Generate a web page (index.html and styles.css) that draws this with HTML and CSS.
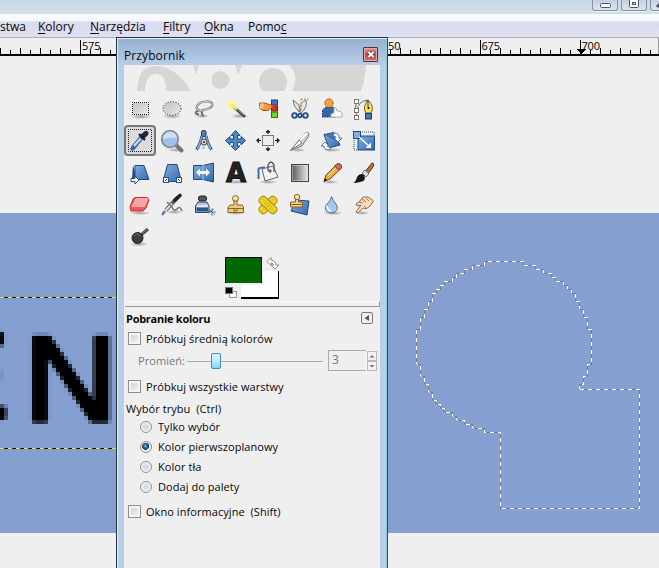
FILE: index.html
```html
<!DOCTYPE html>
<html lang="pl">
<head>
<meta charset="utf-8">
<title>Przybornik</title>
<link rel="stylesheet" href="styles.css">
</head>
<body>
<div class="app">
  <header class="titlebar">
    <span class="winbtn"><svg width="26" height="11"><rect x="8.500" y="3.500" width="10" height="4" rx="1" fill="#fff" stroke="#4e5663"/></svg></span>
    <span class="winbtn"><svg width="26" height="11"><rect x="8.500" y="-3" width="9" height="10.500" rx="1" fill="#fff" stroke="#4e5663"/><rect x="11.500" y="2.500" width="3" height="2" fill="#cdd9e6" stroke="#4e5663"/></svg></span>
    <span class="winbtn"><svg width="26" height="11"><path d="M7 7 13 1" stroke="#4e5663" stroke-width="3"/></svg></span>
  </header>
  <nav class="menubar">
    <span class="m-cut">stwa</span><span class="m-kol"><u>K</u>olory</span><span class="m-nar"><u>N</u>arzędzia</span><span class="m-fil"><u>F</u>iltry</span><span class="m-okn"><u>O</u>kna</span><span class="m-pom">Pomo<u>c</u></span>
  </nav>
  <svg class="ruler" width="659" height="18" shape-rendering="crispEdges">
    <defs><pattern id="ticks" width="20" height="18" patternUnits="userSpaceOnUse"><path d="M0 10h1v6H0zM10 12h1v4h-1z"/></pattern></defs>
    <rect width="658" height="16" fill="url(#ticks)"/>
    <path d="M80 2h1v14h-1zM380 2h1v14h-1zM480 2h1v14h-1zM580 2h1v14h-1zM0 16h659v2H0z"/>
    <path d="M577 11h9l-4.500 5z"/>
    <path d="M658 0h1v16h-1z" fill="#999"/>
    <g class="ruler-text"><text x="82" y="12">575</text><text x="382" y="12">650</text><text x="481.500" y="12">675</text><text x="581.500" y="12">700</text></g>
  </svg>
  <main class="stage">
    <svg class="canvas" width="659" height="320" viewBox="0 213 659 320">
      <defs>
        <filter id="mosaic" filterUnits="userSpaceOnUse" x="-40" y="320" width="160" height="112" color-interpolation-filters="sRGB">
          <feGaussianBlur in="SourceGraphic" stdDeviation="1.300" result="soft"/>
          <feFlood x="-38" y="322" width="1" height="1" flood-color="#000" result="dot"/>
          <feOffset in="dot" x="-40" y="320" width="4" height="4" result="cell"/>
          <feTile in="cell" result="grid"/>
          <feComposite in="soft" in2="grid" operator="in" result="p"/>
          <feOffset in="p" dx="1" result="p1"/><feMerge result="w2"><feMergeNode in="p"/><feMergeNode in="p1"/></feMerge>
          <feOffset in="w2" dx="-2" result="p2"/><feMerge result="w4"><feMergeNode in="w2"/><feMergeNode in="p2"/></feMerge>
          <feOffset in="w4" dy="1" result="p3"/><feMerge result="h2"><feMergeNode in="w4"/><feMergeNode in="p3"/></feMerge>
          <feOffset in="h2" dy="-2" result="p4"/><feMerge><feMergeNode in="h2"/><feMergeNode in="p4"/></feMerge>
        </filter>
        <pattern id="guide" width="8" height="1" patternUnits="userSpaceOnUse"><path d="M0 0h4v1H0z" fill="#dfe13a"/><path d="M4 0h4v1H4z" fill="#111"/></pattern>
      </defs>
      <g class="lettering" filter="url(#mosaic)"><text transform="translate(-71 418)">E</text><text transform="translate(24.500 421) scale(1.070 1)">N</text></g>
      <g shape-rendering="crispEdges">
        <rect y="297" width="117" height="1" fill="url(#guide)"/><rect y="448" width="117" height="1" fill="url(#guide)"/>
        <g transform="translate(400 250) scale(.33333)" fill="none" stroke-width="3">
          <path stroke="#747b8c" d="M540 418H719V775H301V547H253V535H218V523H194V511H170V499H158V487H134V475H122V463H110V451H98V427H86V403H74V379H62V343H50V238H62V202H74V178H86V154H98V130H110V118H122V106H134V94H158V82H170V70H194V58H218V46H255V34H371V46H407V58H431V70H455V82H467V94H491V106H503V118H515V130H527V154H539V178H551V202H563V238H575V343H563V379H551V403H540Z"/>
          <path stroke="#fff" stroke-dasharray="13 11" d="M540 418H719V775H301V547H253V535H218V523H194V511H170V499H158V487H134V475H122V463H110V451H98V427H86V403H74V379H62V343H50V238H62V202H74V178H86V154H98V130H110V118H122V106H134V94H158V82H170V70H194V58H218V46H255V34H371V46H407V58H431V70H455V82H467V94H491V106H503V118H515V130H527V154H539V178H551V202H563V238H575V343H563V379H551V403H540Z"/>
        </g>
      </g>
    </svg>
  </main>
</div>

<section class="toolbox">
  <div class="tb-title"><span>Przybornik</span><span class="close"><svg width="14" height="13"><path d="M4.500 4 9.500 9M9.500 4 4.500 9" stroke="#5a3434" stroke-width="3.400"/><path d="M4.500 4 9.500 9M9.500 4 4.500 9" stroke="#fff" stroke-width="2"/></svg></span></div>
  <div class="tb-body">
    <svg class="banner" width="256" height="26">
      <path d="M13 26C14 8 20 1 32 1 48 1 60 14 67 26H42C43 2 21 4 21 26ZM69 0H75L72 10ZM111 0H118L114 10ZM157 0H242Q241 16 237 26H168Q176 10 165 0Z" fill="#d6d6d6"/>
      <circle cx="96.500" cy="15" r="9" fill="#d6d6d6"/><circle cx="149" cy="17" r="14" fill="#d6d6d6"/>
    </svg>
    <div class="tools">
      <svg><defs>
        <linearGradient id="blu" x2="1" y2="1"><stop stop-color="#82aee0"/><stop offset="1" stop-color="#3668ac"/></linearGradient>
        <linearGradient id="gry" x2="1" y2="1"><stop stop-color="#bfc3bd"/><stop offset="1" stop-color="#e8e9e5"/></linearGradient>
        <linearGradient id="bw"><stop stop-color="#555"/><stop offset="1" stop-color="#eee"/></linearGradient>
        <radialGradient id="shade"><stop stop-opacity=".35"/><stop offset="1" stop-opacity="0"/></radialGradient></defs>
        <ellipse cx="17" cy="23.500" rx="11" ry="3" fill="url(#shade)"/><rect x="8.500" y="9.500" width="16" height="12" fill="url(#gry)" stroke="#fff"/><rect x="8.500" y="9.500" width="16" height="12" fill="none" stroke="#111" stroke-dasharray="1 1" stroke-dashoffset=".5"/></svg>
      <svg><ellipse cx="16" cy="23" rx="10" ry="3" fill="url(#shade)"/><ellipse cx="16" cy="15.500" rx="9" ry="6.700" fill="url(#gry)" stroke="#fff"/><ellipse cx="16" cy="15.500" rx="9" ry="6.700" fill="none" stroke="#111" stroke-dasharray="1.300 1.400"/></svg>
      <svg><ellipse cx="14" cy="23" rx="8" ry="2" fill="url(#shade)"/><g fill="none"><path d="M13 18C5 17 9 9 18 8.500 27 8 26 14 19 16 15 17 13 18 11 18M11 18C6 18 7 22 11 21M12 18C16 18 12 22 16 23" stroke="#777974" stroke-width="2.200"/><path d="M13 18C5 17 9 9 18 8.500 27 8 26 14 19 16 15 17 13 18 11 18" stroke="#d4d5d0" stroke-width="1"/></g></svg>
      <svg><ellipse cx="20" cy="23" rx="9" ry="2.500" fill="url(#shade)"/><circle cx="12" cy="12" r="5" fill="#fff6a0" opacity=".8"/><path d="M12 8v8M8 12h8" stroke="#f3e468"/><path d="M15 15 24 23" stroke="#454743" stroke-width="3" stroke-linecap="round"/><path d="M14 13.500 17 16" stroke="#e9e28b" stroke-width="3"/><path d="M17 16 24 22" stroke="#9a9d96"/></svg>
      <svg><rect x="19.500" y="7" width="6" height="5" fill="#3d75b8" stroke="#1e4776"/><rect x="19.500" y="13" width="6" height="5" fill="#e22b2b" stroke="#8c1111"/><rect x="19.500" y="19" width="6" height="5.500" fill="#66dc25" stroke="#287809"/><path d="M7.500 10H13L21 13Q22 15 19 15L16 17.500H11L8 15.500Z" fill="#f49a42" stroke="#aa5610"/><path d="M8 10.500h4l-1 5H8z" fill="#f9c28b"/></svg>
      <svg><path d="M17 6H26" stroke="#c7951d" stroke-dasharray="2 1"/><path d="M9 7Q9 13 15 19L17 17Q15 10 9 7ZM22 7Q24 14 17 20L15 17Q16 9 22 7Z" fill="#e4e4e4" stroke="#777"/><g fill="#e9f0fa" stroke="#204f8c" stroke-width="1.800"><circle cx="10.500" cy="22.500" r="2.300"/><circle cx="16" cy="22.500" r="1.800"/><circle cx="21.500" cy="22.500" r="2.300"/></g><path d="M17 6v12" stroke="#c7951d" stroke-dasharray="2 1"/></svg>
      <svg><path d="M6.500 24V17L10 14H17L20 17V24Z" fill="#3467a7" stroke="#182f71" stroke-dasharray="1.500 1"/><circle cx="13" cy="10" r="4.200" fill="#f5a13c" stroke="#a65912" stroke-dasharray="1.500 .700"/><path d="M15 24Q14 20 18 20V15Q20 13 21 18Q25 17 26 20V24Z" fill="#fff" stroke="#aaa"/></svg>
      <svg><path d="M8.500 9Q6 15 8.500 22M9 18Q10 8 20 7" fill="none" stroke="#666"/><g fill="#fff" stroke="#777"><rect x="6.500" y="6.500" width="4" height="4"/><rect x="6.500" y="15.500" width="4" height="4"/><rect x="6.500" y="22.500" width="4" height="4"/></g><path d="M20 7Q14 14 18 20H23Q27 14 20 7Z" fill="#f7df6b" stroke="#73620e"/><path d="M20 7V14" stroke="#443c0f"/><circle cx="20.500" cy="15" r="1"/><rect x="17.500" y="20.500" width="6" height="5.500" fill="#4679b9" stroke="#17396a"/></svg>
      <svg class="on"><rect x="4.500" y="4.500" width="23" height="22" fill="none" stroke="#222" stroke-dasharray="1 1" stroke-dashoffset=".5"/><path d="M9 23 17 13" stroke="#3567a1" stroke-width="4.500" stroke-linecap="round"/><path d="M10 21 18 12" stroke="#c9dcf0" stroke-width="2.200"/><path d="M7 25 10 22" stroke="#3567a1" stroke-width="3"/><path d="M18.500 11.500 22 8.500" stroke="#172442" stroke-width="5" stroke-linecap="round"/><path d="M15 9 21 15" stroke="#152035" stroke-width="2.200"/></svg>
      <svg><ellipse cx="20" cy="25" rx="9" ry="2" fill="url(#shade)"/><path d="M20 20 25.500 25.500" stroke="#747671" stroke-width="4" stroke-linecap="round"/><circle cx="14" cy="14" r="8.300" fill="#9fc3ed" stroke="#888f98" stroke-width="1.800"/><path d="M7 14Q8 7 14 7T21 13Q15 12 7 14Z" fill="#cfe1f7"/></svg>
      <svg><g fill="none" stroke="#244a7c" stroke-width="3"><path d="M14 11Q12 20 8.500 24.500M18 11Q20 20 23.500 24.500"/></g><path d="M14 11Q12 20 9 24M18 11Q20 20 23 24" fill="none" stroke="#8ab3df" stroke-width="1.500"/><rect x="13.500" y="5.500" width="4.500" height="6" rx="1.500" fill="#577fa9" stroke="#254064"/><circle cx="16" cy="17" r="2.800" fill="#eee" stroke="#666" stroke-width="1.300"/><circle cx="16" cy="17" r=".9"/><path d="M15.500 20V24" stroke="#bbb" stroke-width="2"/></svg>
      <svg><path d="M15.500 5.500 20 10.500H17.500V14H21V11.500L25.500 15.500 21 20V17.500H17.500V21H20L15.500 25.500 11 21H13.500V17.500H10V20L5.500 15.500 10 11.500V14H13.500V10.500H11Z" fill="#5288c8" stroke="#1e4a84"/></svg>
      <svg><rect x="10.500" y="10.500" width="11" height="10" fill="#eee" stroke="#777"/><path d="M16 6V9M16 22V25M5 15.500H9M23 15.500H27M14 7.500 16 5.500 18 7.500M14 23.500 16 25.500 18 23.500M7 13.500 5 15.500 7 17.500M25 13.500 27 15.500 25 17.500" fill="none" stroke="#111" stroke-width="1.200"/></svg>
      <svg><ellipse cx="14" cy="25" rx="8" ry="2" fill="url(#shade)"/><path d="M6.500 25.500 22 7.500Q26 7 24.500 11L18 21Z" fill="#d3d4d0" stroke="#777"/><path d="M7 25 15 15 18 18Z" fill="#fafafa" stroke="#777"/><path d="M16 15 23 8" stroke="#fff" stroke-width="2"/></svg>
      <svg><ellipse cx="16" cy="25" rx="10" ry="2" fill="url(#shade)"/><path d="M8 9.500 18 7.500 24 20 13 23Z" fill="url(#blu)" stroke="#1e4a84"/><path d="M8 10 18 8 22 17Z" fill="#235293" opacity=".5"/><path d="M18 8Q24 8 23 13H26L22 17 18 13H20Q20 11 17 11ZM14 25Q8 25 8 21H5L9 17 13 21H11Q11 22 14 22Z" fill="#fff" stroke="#537eb1"/></svg>
      <svg><rect x="10" y="11" width="16.500" height="14" fill="url(#blu)" stroke="#1e4a84"/><rect x="5.500" y="6.500" width="7" height="7" fill="#83afe2" stroke="#1e4a84"/><path d="M14 7H26V11M6 15V25H9" fill="none" stroke="#254f86" stroke-dasharray="1 1"/><path d="M11 12 21 21" stroke="#fff" stroke-width="1.500"/><path d="M23 23H17.500L23 17.500Z" fill="#fff"/></svg>
      <svg><path d="M9 8 13 22 8 22Z" fill="#214a80"/><path d="M11 8.500H20L25 22.500H11Z" fill="url(#blu)" stroke="#1e4a84"/><path d="M7 21.500H11V19L15 23 11 27V24.500H7Z" fill="#fff" stroke="#24528c"/></svg>
      <svg><path d="M11.500 7.500H21L25.500 24.500H7Z" fill="url(#blu)" stroke="#1e4a84"/><g fill="#fff" stroke="#24528c"><rect x="7.500" y="20.500" width="5" height="5"/><rect x="20.500" y="20.500" width="5" height="5"/></g><path d="M9 24 11 22M22 22 24 24" stroke="#24528c"/></svg>
      <svg><path d="M5.500 8.500H15L25.500 6V25L15 22.500H5.500Z" fill="url(#blu)" stroke="#1e4a84"/><path d="M15 8V23" stroke="#a8c7eb"/><path d="M8 15.500 12 11.500V14H18V11.500L22 15.500 18 19.500V17H12V19.500Z" fill="#fff"/></svg>
      <svg><ellipse cx="16" cy="25" rx="13" ry="2" fill="url(#shade)"/><text class="glyph-a" x="16" y="25" text-anchor="middle">A</text></svg>
      <svg><ellipse cx="16" cy="25" rx="10" ry="2" fill="url(#shade)"/><path d="M6.500 22V12Q7 10.500 13 10.500" fill="none" stroke="#3d6cab" stroke-width="2"/><path d="M10 12 21 9 26 20 13 24Z" fill="#f2f2f2" stroke="#666"/><path d="M16 14V8Q19 2 22 8V15" fill="none" stroke="#555" stroke-width="1.300"/><circle cx="18" cy="14" r="1.700" fill="#666"/></svg>
      <svg><rect x="7.500" y="7.500" width="17" height="17" fill="url(#bw)" stroke="#444"/><rect x="8.500" y="8.500" width="15" height="15" fill="none" stroke="#ddd" opacity=".5"/></svg>
      <svg><ellipse cx="14" cy="25" rx="9" ry="2" fill="url(#shade)"/><path d="M8 24.500 10 18 21 7Q26 6 25.500 11L14 22Z" fill="#e8ad45" stroke="#754611"/><path d="M20 7.500Q26 5 25.500 11L23 13 18.500 9Z" fill="#d96a62" stroke="#803d36"/><path d="M8 24.500 9 21 11 23Z"/><path d="M12 19 20 11" stroke="#fbd98d"/></svg>
      <svg><path d="M16 16 24 6Q27 6 25 10L19 18Z" fill="#b17632" stroke="#583515"/><path d="M14 16 17 13 21 17 18 20Z" fill="#ddd" stroke="#777"/><path d="M5 26Q8 25 9 20 12 15 16 18 19 24 12 25 9 26 5 26Z" fill="#151515"/></svg>
      <svg><ellipse cx="16" cy="24" rx="11" ry="2" fill="url(#shade)"/><path d="M11 8.500H23.500L25 11 22 19 19 22H7L6 18 9 10Z" fill="#e9595e" stroke="#c62d38"/><path d="M12 9.500H24L20.500 17.500H8Z" fill="#f5a6a3" stroke="#ffc3c1" stroke-width=".7"/></svg>
      <svg><ellipse cx="18" cy="23" rx="9" ry="2" fill="url(#shade)"/><path d="M6 26 9 22" stroke="#557bb3" stroke-width="2.500"/><path d="M10 21 22 8" stroke="#555" stroke-width="4"/><path d="M10 21 16 14.500" stroke="#ddd" stroke-width="2"/><path d="M19 11 24 6.500" stroke="#222" stroke-width="3.600" stroke-linecap="round"/><path d="M11 13 16 18Q18 24 22 19 24 17 26 22" fill="none" stroke="#777" stroke-width="1.500"/></svg>
      <svg><rect x="10.500" y="7" width="8" height="5" rx="2" fill="#555" stroke="#222"/><path d="M10 13H19L21 17V23.500H7.500V17Z" fill="#b6c5da" stroke="#29466d"/><path d="M8.500 18.500H20V22.500H8.500Z" fill="#28588f"/><path d="M9 17h11" stroke="#dce8f5" stroke-width="2"/><path d="M20 24 26 20M19 23H28M21 20 27 26M24 19V27" stroke="#2b5e9b" stroke-width=".700"/></svg>
      <svg><ellipse cx="16" cy="24" rx="11" ry="2" fill="url(#shade)"/><circle cx="15.500" cy="9.500" r="3" fill="#f5ddb0" stroke="#8c651f"/><path d="M14 12H17V16H22L23.500 18V23.500H8V18L10 16H14Z" fill="#edca85" stroke="#8c651f"/><path d="M8 19.500H23M14 19V22H17V19" stroke="#8c651f" fill="none"/></svg>
      <svg><g stroke="#a68b0c" fill="#f0d52e"><rect x="5.500" y="12" width="21" height="8" rx="3.500" transform="rotate(-43 16 16)"/><rect x="5.500" y="12" width="21" height="8" rx="3.500" transform="rotate(43 16 16)"/></g><path d="M9 10 22 23M10 9 23 22M9 22 22 9M10 23 23 10M14 12 20 18M12 14 18 20" stroke="#c1a51a" stroke-dasharray="1 1.500"/></svg>
      <svg><path d="M12 11 25 12 23 26 7 22Z" fill="url(#blu)" stroke="#1e4a84"/><circle cx="13" cy="8" r="2.700" fill="#f5ddb0" stroke="#8c651f"/><path d="M11.500 10.500H14.500V13H18.500V18H6.500V13H11.500Z" fill="#f0d193" stroke="#8c651f"/><path d="M7 15.500H18" stroke="#8c651f"/></svg>
      <svg><ellipse cx="17" cy="24" rx="10" ry="2.500" fill="url(#shade)"/><path d="M15.500 7.500Q17 12 20 15 23 20 19 23 15 25 11.500 23 7 19 12 14 15 11 15.500 7.500Z" fill="#a6c8ec" stroke="#4a73a8"/><path d="M11 17Q11 21 15 22" stroke="#e9f3ff" stroke-width="2" fill="none"/></svg>
      <svg><ellipse cx="14" cy="24" rx="8" ry="2" fill="url(#shade)"/><path d="M15 8H20L25.500 12 22 17 18 20 15 19 10 24 8 23 13 16 9 17 8 15 12 12Z" fill="#f6dcc0" stroke="#9a6b48"/><path d="M11 13 15 14M14 10 18 13M18 9 21 12M16 17 18 19" stroke="#a87a58"/></svg>
      <svg><ellipse cx="15" cy="23" rx="9" ry="2.500" fill="url(#shade)"/><path d="M16 15 24 8" stroke="#444" stroke-width="3"/><path d="M18 13 24 8" stroke="#888"/><circle cx="13.500" cy="17" r="5.500" fill="#3c3d3b" stroke="#222"/><path d="M10 15Q13 11 16 15" fill="none" stroke="#777"/></svg>
    </div>
    <div class="swatches">
      <svg width="56" height="44" shape-rendering="crispEdges">
        <rect x="16" y="14" width="38" height="28" fill="#000"/><rect x="16" y="14" width="37" height="26" fill="#fff"/>
        <rect x="0" y="0" width="38" height="28" fill="#efefef"/><rect x="0" y="0" width="37" height="26" fill="#000"/><rect x="1" y="1" width="35" height="25" fill="#060"/>
        <path d="M42 4.500 46 0.500V3Q51 4 51 8H54L50 12 46 8H48.500Q48 6 46 6V8.500Z" fill="#fff" stroke="#8b8b8b" shape-rendering="auto"/>
        <rect x="4.500" y="34.500" width="7" height="6" fill="#fff" stroke="#999"/><rect x="0.500" y="30.500" width="7" height="6" fill="#000" stroke="#777"/>
      </svg>
    </div>
    <div class="divider"></div>
    <div class="row head"><b>Pobranie koloru</b><span class="fold"><svg width="10" height="10"><path d="M7 2V8L2.500 5Z" fill="#555"/></svg></span></div>
    <div class="row r-avg"><i class="check"></i><span>Próbkuj średnią kolorów</span></div>
    <div class="row r-radius"><span class="r-label">Promień:</span><span class="track"><i class="thumb"></i></span><span class="spin"><span class="num">3</span><span class="steps"><i><svg width="8" height="8"><path d="M1.500 5.500H6.500L4 3Z"/></svg></i><i><svg width="8" height="8"><path d="M1.500 3H6.500L4 5.500Z"/></svg></i></span></span></div>
    <div class="row r-all"><i class="check"></i><span>Próbkuj wszystkie warstwy</span></div>
    <div class="row r-mode"><span>Wybór trybu&nbsp; (Ctrl)</span></div>
    <div class="row opt"><i class="radio"></i><span>Tylko wybór</span></div>
    <div class="row opt"><i class="radio sel"></i><span>Kolor pierwszoplanowy</span></div>
    <div class="row opt"><i class="radio"></i><span>Kolor tła</span></div>
    <div class="row opt"><i class="radio"></i><span>Dodaj do palety</span></div>
    <div class="row r-info"><i class="check"></i><span>Okno informacyjne&nbsp; (Shift)</span></div>
  </div>
</section>
</body>
</html>
```
FILE: styles.css
```css
* { box-sizing: border-box; }
body { margin: 0; width: 659px; height: 568px; overflow: hidden; position: relative; background: #efefef; color: #080808; font: 11px "Open Sans", "Noto Sans", sans-serif; }
svg { display: block; }
.app { display: flex; flex-direction: column; height: 568px; }
.titlebar { height: 14px; background: linear-gradient(#c9d7e4, #d3e0ee); display: flex; gap: 3px; padding-left: 592px; overflow: hidden; }
.winbtn { flex: none; width: 26px; height: 11px; border: 1px solid #8391a5; border-top: 0; border-radius: 0 0 3px 3px; background: linear-gradient(#c3d0df, #dce6f1); box-shadow: 0 1px #edf4fb; }
.winbtn svg { margin-left: -1px; }
.menubar { height: 24px; display: flex; align-items: center; padding-top: 1px; font-size: 12px; background: linear-gradient(#fcfdff 0, #f3f6fc 7px, #d7dcee 8px, #dee0f2 22px); border-bottom: 1px solid #a9adbd; white-space: nowrap; }
.menubar u { text-underline-offset: 2px; }
.menubar span { flex: none; }
.m-cut { width: 38px; }
.m-kol { width: 52px; }
.m-nar { width: 73px; }
.m-fil { width: 41px; }
.m-okn { width: 44px; }
.ruler { flex: none; background: #efefef; }
.ruler-text { font-size: 11px; letter-spacing: -.2px; }
.stage { flex: 1; padding-top: 157px; }
.canvas { background: #849fd0; }
.lettering { font: 121px "Liberation Sans", sans-serif; stroke: #000; stroke-width: 4.5px; stroke-linejoin: round; }
.toolbox { position: absolute; left: 116px; top: 37px; width: 272px; height: 531px; border: 1px solid #26333f; border-right-color: #145362; border-bottom: 0; padding: 0 6px; background: linear-gradient(#94b0d0, #b9cee7 27px); box-shadow: inset 1px 1px #e4eef8, inset -1px 0 #8fc8dc; }
.tb-title { height: 27px; display: flex; align-items: center; justify-content: space-between; padding: 7px 3px 0 1px; font-size: 12px; letter-spacing: .1px; }
.close { width: 15px; height: 15px; margin-top: -2px; border: 1px solid #602c36; border-radius: 1px; background: linear-gradient(#d99c97, #b75249 50%, #c67364); box-shadow: inset 0 0 0 1px #e2aaa4; }
.tb-body { margin-left: 1px; width: 256px; height: 503px; background: #efefef; }
.tools { display: grid; grid-template-columns: repeat(8, 32px); grid-auto-rows: 32px; margin-top: 2px; }
.tools svg { width: 32px; height: 32px; }
.tools .on { border: 2px solid #777; border-radius: 4px; background: #dcdcdc; height: 31px; }
.tools .on > * { transform: translate(-2px, -2px); }
.glyph-a { font: bold 26px "DejaVu Sans", sans-serif; fill: #222; stroke: #111; }
.swatches { padding: 4px 0 0 101px; height: 48px; }
.divider { height: 6px; margin: 0 0 0 1px; border-bottom: 1px solid #999; border-right: 1px solid #999; border-top: 1px solid #fafafa; }
.row { display: flex; align-items: center; white-space: nowrap; height: 20px; letter-spacing: .06px; }
.head { height: 22px; padding: 0 7px 0 2px; justify-content: space-between; letter-spacing: -.27px; }
.fold { width: 12px; height: 12px; border: 1px solid #777; border-radius: 2px; }
.check { width: 13px; height: 13px; margin: 0 5px 0 4px; border: 1px solid #8e8f8f; background: linear-gradient(135deg, #ccd0d5, #f6f6f6); box-shadow: inset 0 0 0 2px #f4f4f4; flex: none; }
.r-avg { height: 19px; }
.r-radius { height: 25px; padding-left: 14px; color: #777; }
.r-label { width: 49px; margin-top: -1px; }
.track { width: 136px; height: 16px; background: linear-gradient(#aaa, #aaa) 0 8px / 100% 1px no-repeat; }
.thumb { display: block; margin-left: 24px; width: 10px; height: 16px; border: 1px solid #3b94b4; border-radius: 2px; background: linear-gradient(#dff5fd, #c3ebfb 50%, #7ed6f5); }
.spin { margin-left: 5px; display: flex; width: 49px; height: 21px; background: #fafafa; }
.num { width: 38px; border: 1px solid #aaa; border-right: 0; background: #efefef; line-height: 18px; padding-left: 3px; font-size: 12px; }
.steps { padding: 1px 0 0 1px; }
.steps i { display: block; width: 10px; height: 10px; border: 1px solid #b7b7b7; background: #f2f2f2; fill: #777; }
.r-all { height: 27px; }
.r-mode { height: 16px; padding-left: 2px; }
.opt { padding-left: 16px; }
.radio { width: 12px; height: 12px; margin: 2px 6px 0 0; border: 1px solid #8e8f8f; border-radius: 50%; background: radial-gradient(#cfd3d6, #fafafa); box-shadow: inset 0 0 0 1px #f5f5f5; }
.radio.sel { background: radial-gradient(circle at 45% 40%, #7ed1ef 0, #205f88 2px, #17415f 3.500px, #ddeef6 4px); }
.r-info { height: 30px; }
```
